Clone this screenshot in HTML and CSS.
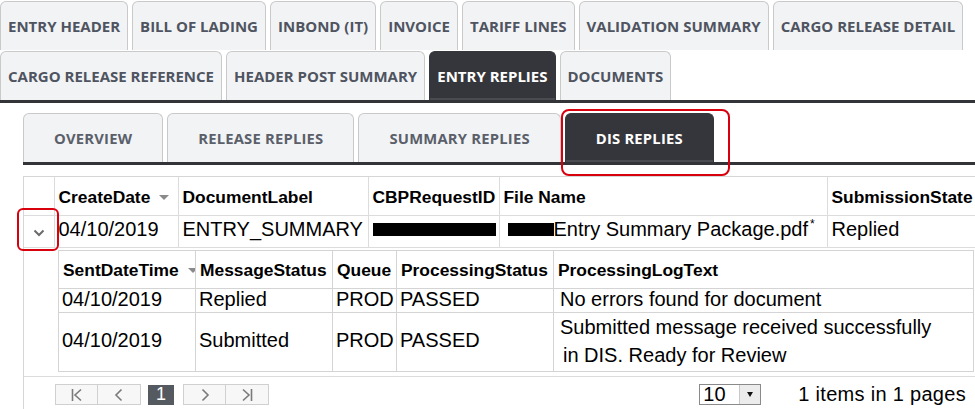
FILE: index.html
```html
<!DOCTYPE html>
<html lang="en">
<head>
<meta charset="utf-8">
<title>Entry Replies - DIS Replies</title>
<link rel="stylesheet" href="styles.css">
</head>
<body>
<div class="page">
  <nav class="main-tabs">
    <div class="tab-row">
      <a class="tab">ENTRY HEADER</a>
      <a class="tab">BILL OF LADING</a>
      <a class="tab">INBOND (IT)</a>
      <a class="tab">INVOICE</a>
      <a class="tab">TARIFF LINES</a>
      <a class="tab">VALIDATION SUMMARY</a>
      <a class="tab">CARGO RELEASE DETAIL</a>
    </div>
    <div class="tab-row">
      <a class="tab">CARGO RELEASE REFERENCE</a>
      <a class="tab">HEADER POST SUMMARY</a>
      <a class="tab active">ENTRY REPLIES</a>
      <a class="tab">DOCUMENTS</a>
    </div>
  </nav>

  <section class="content">
    <nav class="sub-tabs">
      <a class="subtab">OVERVIEW</a>
      <a class="subtab">RELEASE REPLIES</a>
      <a class="subtab">SUMMARY REPLIES</a>
      <a class="subtab active">DIS REPLIES<span class="callout callout-tab"></span></a>
    </nav>

    <div class="grid">
      <table class="master">
        <colgroup>
          <col class="c-exp"><col class="c-date"><col class="c-label"><col class="c-cbp"><col class="c-file"><col class="c-state">
        </colgroup>
        <thead>
          <tr>
            <th class="exp"></th>
            <th>CreateDate<span class="sort"></span></th>
            <th>DocumentLabel</th>
            <th>CBPRequestID</th>
            <th>File Name</th>
            <th>SubmissionState</th>
          </tr>
        </thead>
        <tbody>
          <tr class="master-row">
            <td class="exp">
              <svg class="chev" width="12" height="8" viewBox="0 0 12 8"><path d="M1.5 1.5 L6 6 L10.5 1.5" fill="none" stroke="#6b6b6b" stroke-width="2"/></svg>
              <span class="callout callout-exp"></span>
            </td>
            <td>04/10/2019</td>
            <td>ENTRY_SUMMARY</td>
            <td><span class="redact redact-cbp"></span></td>
            <td><span class="redact redact-file"></span>Entry Summary Package.pdf<sup>*</sup></td>
            <td>Replied</td>
          </tr>
          <tr class="detail-row">
            <td class="exp-blank"></td>
            <td class="detail-cell" colspan="5">
              <table class="child">
                <colgroup>
                  <col class="d-sent"><col class="d-msg"><col class="d-queue"><col class="d-proc"><col class="d-log">
                </colgroup>
                <thead>
                  <tr>
                    <th>SentDateTime<span class="sort"></span></th>
                    <th>MessageStatus</th>
                    <th>Queue</th>
                    <th>ProcessingStatus</th>
                    <th>ProcessingLogText</th>
                  </tr>
                </thead>
                <tbody>
                  <tr class="r1">
                    <td>04/10/2019</td>
                    <td>Replied</td>
                    <td>PROD</td>
                    <td>PASSED</td>
                    <td class="log"> No errors found for document</td>
                  </tr>
                  <tr class="r2">
                    <td>04/10/2019</td>
                    <td>Submitted</td>
                    <td>PROD</td>
                    <td>PASSED</td>
                    <td class="log">Submitted message received successfully<br><span class="indent">in DIS. Ready for Review</span></td>
                  </tr>
                </tbody>
              </table>
            </td>
          </tr>
        </tbody>
      </table>

      <div class="pager">
        <div class="pager-nav">
          <span class="pbtn"><svg width="14" height="14" viewBox="0 0 14 14"><path d="M2.5 1 V13 M11 1.5 L5 7 L11 12.5" fill="none" stroke="#7a7a7a" stroke-width="1.6"/></svg></span><span class="pbtn"><svg width="14" height="14" viewBox="0 0 14 14"><path d="M9.5 1.5 L4 7 L9.5 12.5" fill="none" stroke="#7a7a7a" stroke-width="1.6"/></svg></span>
          <span class="pcur">1</span>
          <span class="pbtn"><svg width="14" height="14" viewBox="0 0 14 14"><path d="M4.5 1.5 L10 7 L4.5 12.5" fill="none" stroke="#7a7a7a" stroke-width="1.6"/></svg></span><span class="pbtn"><svg width="14" height="14" viewBox="0 0 14 14"><path d="M3 1.5 L9 7 L3 12.5 M11.5 1 V13" fill="none" stroke="#7a7a7a" stroke-width="1.6"/></svg></span>
        </div>
        <div class="pager-size">
          <span class="psel"><span class="psel-val">10</span><span class="psel-arrow"></span></span>
          <span class="pinfo">1 items in 1 pages</span>
        </div>
      </div>
    </div>
  </section>
</div>
</body>
</html>
```

FILE: styles.css
```css
* { box-sizing: border-box; }
html, body { margin: 0; padding: 0; background: #fff; }
body { overflow: hidden; width: 975px; height: 409px; }
.page { width: 975px; }

/* main tabs */
.main-tabs { border-bottom: 3px solid #333438; }
.tab-row { display: flex; gap: 4px; height: 50px; align-items: flex-end; }
.tab {
  display: flex; align-items: center; justify-content: center;
  height: 49px; padding: 0 7px;
  background: #f2f3f5;
  border: 1.5px solid #c9c9c9; border-bottom: none;
  border-radius: 6px 6px 0 0;
  font-family: "Open Sans", sans-serif; font-weight: 700; font-size: 15px;
  color: #4f5461; white-space: nowrap;
}
.tab.active { background: #35363b; border-color: #35363b; color: #fff; box-shadow: inset 0 -2px 0 #4a4b50; }

/* content */
.content { padding: 10px 0 0 23px; }
.sub-tabs { display: flex; gap: 4px; border-bottom: 3px solid #333438; height: 52px; align-items: flex-end; }
.subtab {
  position: relative;
  display: flex; align-items: center; justify-content: center;
  height: 49px; padding: 0 30px;
  background: #f2f3f5;
  border: 1.5px solid #c9c9c9; border-bottom: none;
  border-radius: 6px 6px 0 0;
  font-family: "Open Sans", sans-serif; font-weight: 700; font-size: 14.8px; letter-spacing: 0.2px;
  color: #5a5f6a; white-space: nowrap;
}
.subtab.active { background: #35363b; border-color: #35363b; color: #fff; box-shadow: inset 0 -2px 0 #4a4b50; }

.callout { position: absolute; border: 2.5px solid #d9000d; border-radius: 8px; pointer-events: none; }
.callout-tab { left: -5px; right: -17px; top: -5px; bottom: -14px; }
.callout-exp { left: -7px; right: -5px; top: -8px; bottom: -4px; border-radius: 6px; }

/* grid */
.grid {
  margin-top: 11px; width: 956px;
  border: 1px solid #d6d6d6;
  font-family: "Liberation Sans", Arial, sans-serif; color: #000;
}
.master { width: 100%; border-collapse: collapse; table-layout: fixed; }
.c-exp { width: 30px; }
.c-date { width: 124px; }
.c-label { width: 190px; }
.c-cbp { width: 131px; }
.c-file { width: 328px; }
.c-state { width: 151px; }

.master th, .master td { border-right: 1px solid #dcdcdc; border-bottom: 1px solid #dcdcdc; padding: 0 0 0 4px; white-space: nowrap; text-align: left; overflow: hidden; }
.master thead th { height: 38px; font-size: 17.4px; font-weight: 700; vertical-align: middle; padding-top: 3px; }
.master-row td { height: 32px; font-size: 20px; vertical-align: middle; padding-bottom: 3px; }
.master td.exp { position: relative; overflow: visible; text-align: center; padding: 4px 0 0 0; }
.chev { display: block; margin: 0 auto; }
.master td.exp-blank { border-right: none; border-bottom: 1px solid #dcdcdc; }

.sort { display: inline-block; width: 0; height: 0; border-left: 5px solid transparent; border-right: 5px solid transparent; border-top: 5px solid #8a8a8a; margin-left: 9px; vertical-align: middle; position: relative; top: -1px; }

.redact { display: inline-block; height: 13px; background: #000; vertical-align: middle; position: relative; top: -1px; }
.redact-cbp { width: 123px; }
.redact-file { width: 46px; margin-left: 4px; }
sup { font-size: 12px; vertical-align: top; position: relative; top: -1px; margin-left: 2px; }

.detail-cell { padding: 2px 4px 4px 4px !important; height: 126px; vertical-align: top; }
.child { width: 100%; border-collapse: collapse; table-layout: fixed; border: 1.5px solid #8f8f8f; }
.d-sent { width: 137px; }
.d-msg { width: 137px; }
.d-queue { width: 64px; }
.d-proc { width: 157px; }
.d-log { width: auto; }
.child th, .child td { border: 1px solid #d4d4d4; padding: 0 0 0 3px; text-align: left; white-space: nowrap; }
.child th { height: 40px; font-size: 17px; font-weight: 700; padding-left: 4px; padding-top: 2px; }
.child td { font-size: 20px; }
.child .r1 td { height: 24px; line-height: 20px; padding-bottom: 2px; }
.child .r2 td { height: 56px; vertical-align: middle; padding-bottom: 2px; }
.child td.log { padding-left: 6px; }
.child .r2 td.log { line-height: 28px; padding-left: 6px; }
.indent { padding-left: 3px; }

/* pager */
.pager { height: 36px; display: flex; align-items: center; justify-content: space-between; padding: 0 12px 0 31px; }
.pager-nav { display: flex; align-items: center; }
.pbtn { display: inline-flex; align-items: center; justify-content: center; width: 43px; height: 21px; border: 1px solid #d0d0d0; background: #f7f7f7; }
.pbtn + .pbtn { border-left: none; }
.pcur { display: inline-flex; align-items: center; justify-content: center; width: 26px; height: 20px; margin: 0 9px 0 7px; background: #555960; color: #fff; font-size: 18px; }
.pager-size { display: flex; align-items: center; gap: 37px; font-size: 20px; }
.psel { display: inline-flex; width: 62px; height: 21px; border: 1px solid #8a8a8a; background: #fff; }
.psel-val { flex: 1; font-size: 20px; line-height: 19px; padding-left: 3px; }
.psel-arrow { width: 21px; background: #ececec; border-left: 1px solid #c8c8c8; position: relative; }
.psel-arrow::after { content: ""; position: absolute; left: 7px; top: 7px; border-left: 3.5px solid transparent; border-right: 3.5px solid transparent; border-top: 5px solid #111; }
.pinfo { font-size: 20px; letter-spacing: 0.3px; }
```
